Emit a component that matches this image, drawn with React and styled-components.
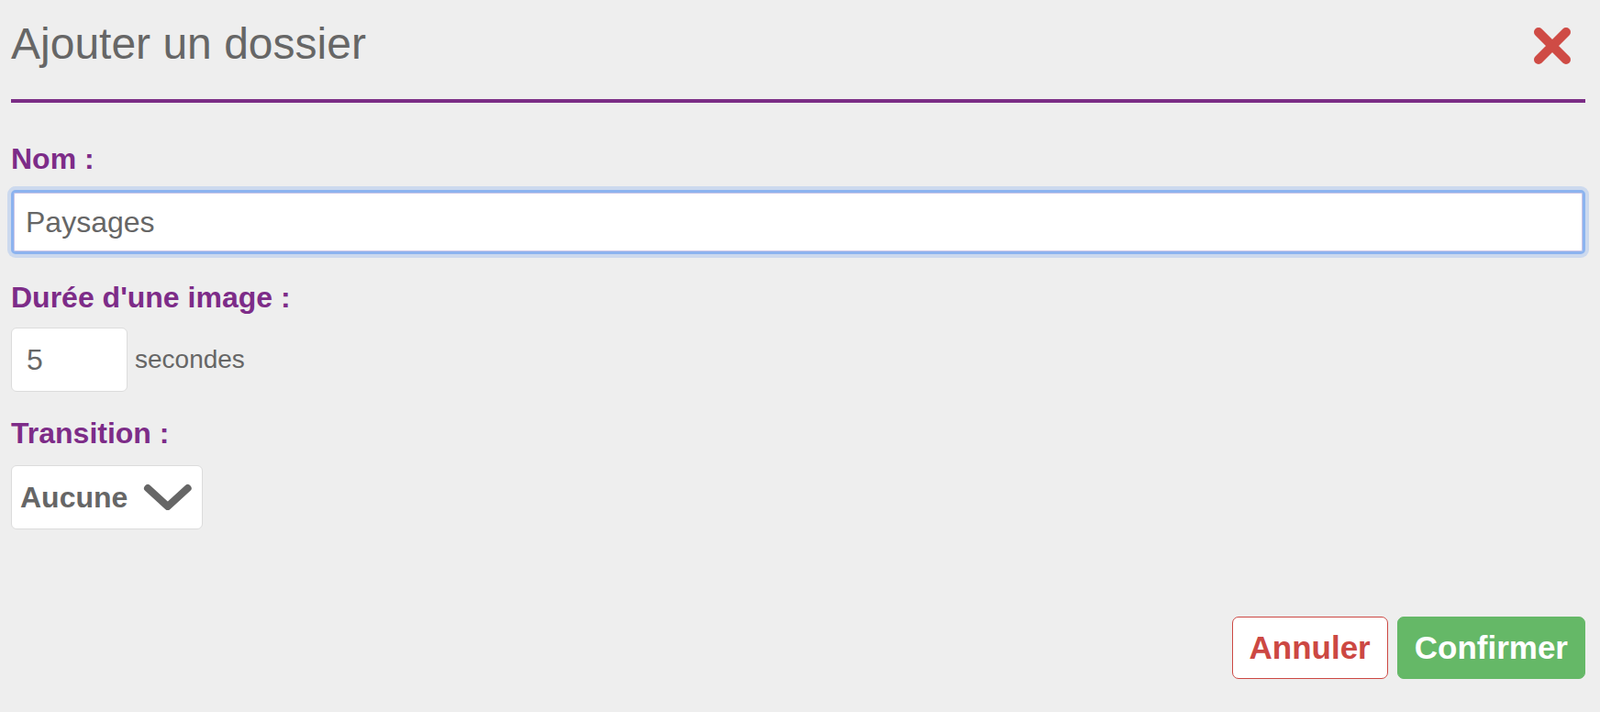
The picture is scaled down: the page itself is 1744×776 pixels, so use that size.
import React from "react"
import styled, { createGlobalStyle } from "styled-components"

const GlobalStyle = createGlobalStyle`
  body {
    margin: 0;
    background: #eeeeee;
    font-family: "Liberation Sans", Arial, sans-serif;
    color: #666;
  }
`;

const Dialog = styled.div`
  padding: 0 16px 0 12px;
  height: 776px;
  box-sizing: border-box;
  display: flex;
  flex-direction: column;
`;

const Header = styled.header`
  display: flex;
  justify-content: space-between;
  align-items: flex-start;
  padding: 20px 0 32px;
  border-bottom: 4px solid #7b2d86;
`;

const Title = styled.h1`
  margin: 0;
  font-size: 48px;
  line-height: 56px;
  font-weight: normal;
  color: #666;
`;

const CloseButton = styled.button`
  border: 0;
  background: none;
  padding: 0;
  margin: 9px 15px 0 0;
  width: 42px;
  height: 42px;
  cursor: pointer;
  display: block;
`;

const Field = styled.div`
  margin-top: ${props => props.gap}px;
`;

const Label = styled.label`
  display: block;
  font-size: 32px;
  line-height: 40px;
  font-weight: bold;
  color: #7d2c88;
  margin-bottom: ${props => props.space || 14}px;
`;

const TextInput = styled.input`
  display: block;
  box-sizing: border-box;
  width: 100%;
  height: 70px;
  margin: 0;
  padding: 0 13px;
  border: 3px solid #8cb3ef;
  border-radius: 5px;
  background: #fff;
  font-family: inherit;
  font-size: 32px;
  color: #666;
  outline: none;
  box-shadow: 0 0 0 4px rgba(140, 179, 239, 0.35), inset 0 0 0 1px rgba(170, 160, 215, 0.6);
`;

const Row = styled.div`
  display: flex;
  align-items: center;
`;

const NumberInput = styled.input`
  box-sizing: border-box;
  width: 127px;
  height: 70px;
  margin: 0;
  padding: 0 16px;
  border: 1px solid #dcdcdc;
  border-radius: 6px;
  background: #fff;
  font-family: inherit;
  font-size: 32px;
  color: #666;
  outline: none;
`;

const Unit = styled.span`
  margin-left: 8px;
  font-size: 28px;
  color: #666;
`;

const Select = styled.div`
  box-sizing: border-box;
  display: inline-flex;
  align-items: center;
  gap: 17px;
  width: 209px;
  height: 70px;
  padding: 0 10px 0 9px;
  border: 1px solid #dcdcdc;
  border-radius: 6px;
  background: #fff;
  font-size: 32px;
  font-weight: bold;
  color: #666;
`;

const Actions = styled.div`
  display: flex;
  justify-content: flex-end;
  gap: 10px;
  margin-top: 95px;
`;

const Button = styled.button`
  box-sizing: border-box;
  height: 68px;
  padding: 0 18px;
  border-radius: 7px;
  font-family: inherit;
  font-size: 35px;
  font-weight: bold;
  cursor: pointer;
  border: 1px solid ${props => (props.primary ? "#65b867" : "#cc4843")};
  background: ${props => (props.primary ? "#65b867" : "#fff")};
  color: ${props => (props.primary ? "#fff" : "#cc4843")};
`;

const CrossIcon = () => (
  <svg width="42" height="42" viewBox="0 0 42 42">
    <path d="M6 6 L36 36 M36 6 L6 36" stroke="#cf4b45" strokeWidth="10" strokeLinecap="round" fill="none" />
  </svg>
);

const Chevron = () => (
  <svg width="54" height="30" viewBox="0 0 54 30">
    <path d="M5 5 L27 25 L49 5" stroke="#666" strokeWidth="8" strokeLinecap="round" strokeLinejoin="round" fill="none" />
  </svg>
);

const App = () => (
  <Dialog>
    <GlobalStyle />
    <Header>
      <Title>Ajouter un dossier</Title>
      <CloseButton aria-label="Fermer"><CrossIcon /></CloseButton>
    </Header>

    <Field gap={41}>
      <Label>Nom :</Label>
      <TextInput defaultValue="Paysages" />
    </Field>

    <Field gap={27}>
      <Label space={13}>Durée d'une image :</Label>
      <Row>
        <NumberInput defaultValue="5" />
        <Unit>secondes</Unit>
      </Row>
    </Field>

    <Field gap={25}>
      <Label space={15}>Transition :</Label>
      <Select>
        Aucune
        <Chevron />
      </Select>
    </Field>

    <Actions>
      <Button>Annuler</Button>
      <Button primary>Confirmer</Button>
    </Actions>
  </Dialog>
)

export default App
